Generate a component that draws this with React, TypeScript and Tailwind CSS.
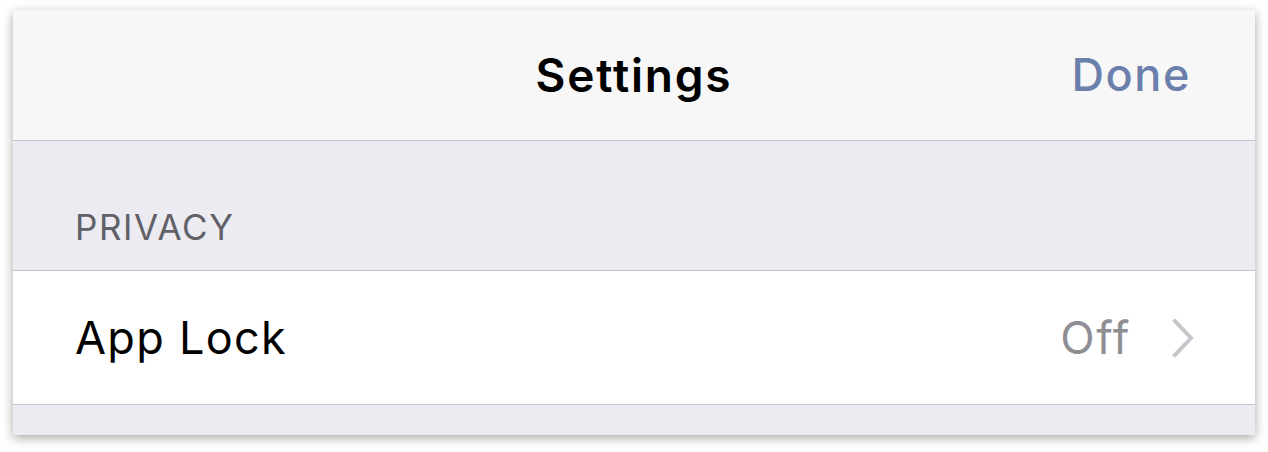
const Chevron = () => (
  <svg width="24" height="40" viewBox="0 0 24 40" className="ml-[40px] shrink-0">
    <path d="M4 3 L20 20 L4 37" fill="none" stroke="#c7c7cc" strokeWidth="4" strokeLinecap="square" />
  </svg>
);

const App = () => {
  return (
    <div className="h-[452px] w-[1268px] bg-white pt-[10px] px-[13px] font-['Inter','Liberation_Sans',sans-serif]">
      <div className="flex h-[425px] flex-col bg-[#ebebf1] shadow-[0_3px_10px_rgba(0,0,0,0.35)]">
        <div className="relative flex h-[131px] shrink-0 items-center justify-center border-b border-[#c4c4c8] bg-[#f7f7f7]">
          <span className="text-[46px] font-semibold tracking-[1.8px] text-black">Settings</span>
          <button className="absolute right-[64px] text-[45px] font-medium tracking-[1.6px] text-[#6a7fab]">Done</button>
        </div>
        <div className="flex h-[130px] shrink-0 items-end border-b border-[#c4c4c8] px-[62px] pb-[25px]">
          <span className="text-[35px] leading-none tracking-[1.6px] text-[#606066]">PRIVACY</span>
        </div>
        <div className="flex h-[134px] shrink-0 items-center border-b border-[#c4c4c8] bg-white pl-[62px] pr-[60px]">
          <span className="text-[45px] tracking-[1.3px] text-black">App Lock</span>
          <span className="ml-auto text-[45px] tracking-[1.6px] text-[#8e8e93]">Off</span>
          <Chevron />
        </div>
      </div>
    </div>
  );
};

export default App;
